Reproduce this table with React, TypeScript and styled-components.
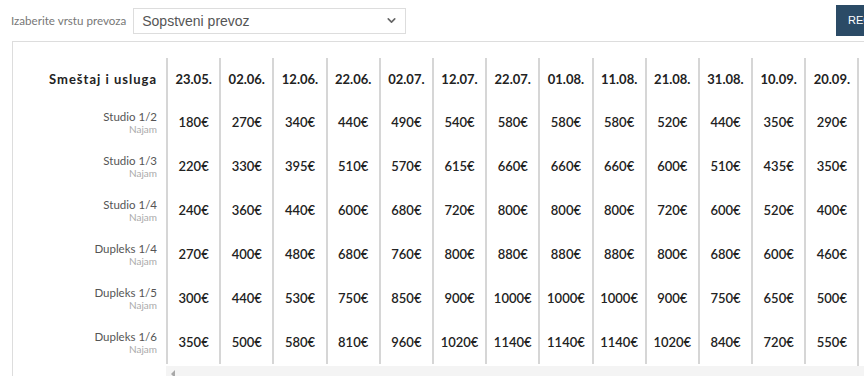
import styled, { createGlobalStyle } from 'styled-components';
import { ChevronDown } from 'lucide-react';

const GlobalStyle = createGlobalStyle`
  body {
    margin: 0;
    overflow: hidden;
    background: #fff;
    font-family: Lato, "Open Sans", sans-serif;
    color: #222;
  }
`;

const Page = styled.div`
  width: 900px;
`;

const Toolbar = styled.div`
  display: flex;
  align-items: center;
  height: 41px;
  padding-left: 11px;
  box-sizing: border-box;
`;

const Label = styled.span`
  font-size: 11.6px;
  color: #777;
`;

const SelectBox = styled.div`
  margin-left: 7px;
  width: 273px;
  height: 26px;
  box-sizing: border-box;
  border: 1px solid #ddd;
  display: flex;
  align-items: center;
  justify-content: space-between;
  padding: 0 7px 0 8px;
  font-family: "Liberation Sans", Arial, sans-serif;
  font-size: 14px;
  color: #555;
`;

const Button = styled.div`
  margin-left: auto;
  margin-top: -1px;
  width: 64px;
  height: 31px;
  background: #2b4b66;
  color: #fff;
  font-family: "Liberation Sans", Arial, sans-serif;
  font-size: 11px;
  display: flex;
  align-items: center;
  padding-left: 12px;
  box-sizing: border-box;
`;

const Card = styled.div`
  margin-left: 12px;
  border-top: 1px solid #ddd;
  border-left: 1px solid #ddd;
  padding-top: 16px;
  display: flex;
`;

const LabelColumn = styled.div`
  width: 153px;
  flex-shrink: 0;
  display: flex;
  flex-direction: column;
`;

const HeadLabel = styled.div`
  height: 42px;
  display: flex;
  align-items: center;
  justify-content: flex-end;
  padding-right: 9px;
  font-size: 13px;
  font-weight: 700;
  letter-spacing: 1px;
`;

const RowLabel = styled.div`
  height: 44px;
  display: flex;
  flex-direction: column;
  align-items: flex-end;
  justify-content: center;
  padding-right: 9px;
`;

const RowName = styled.span`
  font-size: 11.5px;
  line-height: 13px;
  color: #555;
`;

const RowSub = styled.span`
  font-size: 10px;
  line-height: 12px;
  color: #aaa;
`;

const ScrollArea = styled.div`
  flex: 1;
  overflow: hidden;
  display: flex;
  flex-direction: column;
`;

const Grid = styled.div`
  display: grid;
  grid-template-columns: repeat(13, 53.2px);
  grid-template-rows: 42px repeat(6, 44px);
  width: max-content;
  border-right: 2px solid #d6d6d6;
  padding-bottom: 2px;
`;

const Cell = styled.div<{ $head?: boolean }>`
  border-left: 2px solid #d6d6d6;
  display: flex;
  align-items: center;
  justify-content: center;
  font-size: 13px;
  font-weight: ${p => (p.$head ? 700 : 600)};
  color: #222;
`;

const Track = styled.div`
  height: 15px;
  background: #f4f4f4;
  display: flex;
  align-items: center;
  padding-left: 5px;
`;

const ArrowLeft = styled.span`
  width: 0;
  height: 0;
  border-top: 4px solid transparent;
  border-bottom: 4px solid transparent;
  border-right: 4px solid #a8a8a8;
`;

const dates = ['23.05.', '02.06.', '12.06.', '22.06.', '02.07.', '12.07.', '22.07.', '01.08.', '11.08.', '21.08.', '31.08.', '10.09.', '20.09.'];

const rows = [
  { name: 'Studio 1/2', prices: [180, 270, 340, 440, 490, 540, 580, 580, 580, 520, 440, 350, 290] },
  { name: 'Studio 1/3', prices: [220, 330, 395, 510, 570, 615, 660, 660, 660, 600, 510, 435, 350] },
  { name: 'Studio 1/4', prices: [240, 360, 440, 600, 680, 720, 800, 800, 800, 720, 600, 520, 400] },
  { name: 'Dupleks 1/4', prices: [270, 400, 480, 680, 760, 800, 880, 880, 880, 800, 680, 600, 460] },
  { name: 'Dupleks 1/5', prices: [300, 440, 530, 750, 850, 900, 1000, 1000, 1000, 900, 750, 650, 500] },
  { name: 'Dupleks 1/6', prices: [350, 500, 580, 810, 960, 1020, 1140, 1140, 1140, 1020, 840, 720, 550] },
];

export default function App() {
  return (
    <Page>
      <GlobalStyle />
      <Toolbar>
        <Label>Izaberite vrstu prevoza</Label>
        <SelectBox>
          <span>Sopstveni prevoz</span>
          <ChevronDown size={13} strokeWidth={3} color="#666" />
        </SelectBox>
        <Button>REČNIK</Button>
      </Toolbar>

      <Card>
        <LabelColumn>
          <HeadLabel>Smeštaj i usluga</HeadLabel>
          {rows.map(r => (
            <RowLabel key={r.name}>
              <RowName>{r.name}</RowName>
              <RowSub>Najam</RowSub>
            </RowLabel>
          ))}
        </LabelColumn>

        <ScrollArea>
          <Grid>
            {dates.map(d => (
              <Cell key={d} $head>{d}</Cell>
            ))}
            {rows.map(r =>
              r.prices.map((p, i) => <Cell key={r.name + i}>{p}€</Cell>)
            )}
          </Grid>
          <Track>
            <ArrowLeft />
          </Track>
        </ScrollArea>
      </Card>
    </Page>
  );
}
